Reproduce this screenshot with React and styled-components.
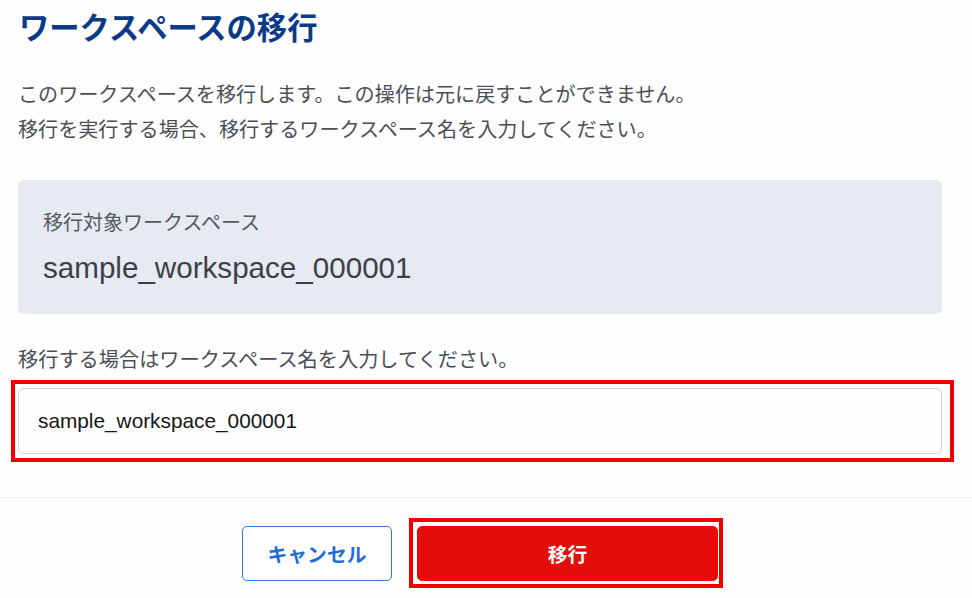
import React from "react";
import styled, { createGlobalStyle } from "styled-components";

const GlobalStyle = createGlobalStyle`
  html, body {
    margin: 0;
    padding: 0;
    background: #ffffff;
  }
  body {
    font-family: "Liberation Sans", "Noto Sans CJK JP", sans-serif;
  }
`;

const Page = styled.div`
  width: 972px;
  height: 598px;
  overflow: hidden;
  background: #fefefe;
  display: flex;
  flex-direction: column;
`;

const Body = styled.div`
  padding: 9px 30px 0 18px;
  display: flex;
  flex-direction: column;
`;

const Title = styled.h1`
  margin: 0 0 0 1px;
  font-size: 30.3px;
  line-height: 40px;
  font-weight: 700;
  color: #0b3a86;
`;

const Description = styled.p`
  margin: 29px 0 0 0;
  font-size: 20.1px;
  line-height: 35px;
  color: #4b4e57;
`;

const TargetBox = styled.div`
  margin-top: 32px;
  background: #e6eaf2;
  border-radius: 6px;
  padding: 29px 25px 28px;
  display: flex;
  flex-direction: column;
  gap: 13px;
`;

const TargetLabel = styled.div`
  font-size: 20px;
  line-height: 28px;
  color: #55585f;
`;

const TargetValue = styled.div`
  font-size: 29.6px;
  line-height: 36px;
  color: #3d4049;
`;

const FieldLabel = styled.label`
  margin-top: 32px;
  font-size: 20.2px;
  line-height: 28px;
  color: #4b4e57;
`;

const Highlight = styled.div`
  position: relative;
  margin-top: 14px;
`;

const Mark = styled.div`
  position: absolute;
  top: ${(p) => p.$t}px;
  left: ${(p) => p.$l}px;
  right: ${(p) => p.$r}px;
  bottom: ${(p) => p.$b}px;
  border: 4.5px solid #f20000;
  pointer-events: none;
`;

const Input = styled.input`
  box-sizing: border-box;
  width: 100%;
  height: 66px;
  border: 1.5px solid #d2d2d4;
  border-radius: 5px;
  padding: 0 19px;
  font-family: "Liberation Sans", "Noto Sans CJK JP", sans-serif;
  font-size: 20.8px;
  color: #161616;
  background: #fefefe;
  outline: none;
`;

const Divider = styled.hr`
  margin: 43px 0 0 0;
  border: none;
  border-top: 1.5px solid #ededf2;
  width: 100%;
`;

const Footer = styled.div`
  padding: 28px 30px 0 18px;
  display: flex;
  justify-content: center;
  gap: 25px;
`;

const Button = styled.button`
  box-sizing: border-box;
  height: 55px;
  width: ${(p) => p.$w}px;
  border-radius: 5px;
  font-family: "Liberation Sans", "Noto Sans CJK JP", sans-serif;
  font-size: 19.8px;
  font-weight: 700;
  cursor: pointer;
  border: 1.5px solid ${(p) => (p.$primary ? "#e50c0c" : "#2f78e0")};
  background: ${(p) => (p.$primary ? "#e50c0c" : "#ffffff")};
  color: ${(p) => (p.$primary ? "#ffffff" : "#1f6cd6")};
`;

const ButtonWrap = styled.div`
  position: relative;
  display: flex;
`;

export default function App() {
  return (
    <Page>
      <GlobalStyle />
      <Body>
        <Title>ワークスペースの移行</Title>
        <Description>
          このワークスペースを移行します。この操作は元に戻すことができません。
          <br />
          移行を実行する場合、移行するワークスペース名を入力してください。
        </Description>
        <TargetBox>
          <TargetLabel>移行対象ワークスペース</TargetLabel>
          <TargetValue>sample_workspace_000001</TargetValue>
        </TargetBox>
        <FieldLabel htmlFor="ws-name">
          移行する場合はワークスペース名を入力してください。
        </FieldLabel>
        <Highlight>
          <Input id="ws-name" defaultValue="sample_workspace_000001" />
          <Mark $t={-8} $l={-7} $r={-12} $b={-8} />
        </Highlight>
      </Body>
      <Divider />
      <Footer>
        <Button $w={150}>キャンセル</Button>
        <ButtonWrap>
          <Button $w={301} $primary>
            移行
          </Button>
          <Mark $t={-8} $l={-8} $r={-5} $b={-7} />
        </ButtonWrap>
      </Footer>
    </Page>
  );
}
